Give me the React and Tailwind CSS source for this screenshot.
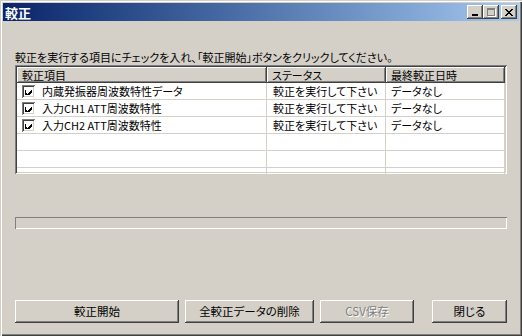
import React from "react";

const raised =
  "shadow-[inset_-1px_-1px_#404040,inset_1px_1px_#ffffff,inset_-2px_-2px_#808080,inset_2px_2px_#d4d0c8]";
const sunken =
  "shadow-[inset_1px_1px_#808080,inset_-1px_-1px_#ffffff,inset_2px_2px_#404040,inset_-2px_-2px_#d4d0c8]";

const rows = [
  { name: "内蔵発振器周波数特性データ", status: "較正を実行して下さい", date: "データなし" },
  { name: "入力CH1 ATT周波数特性", status: "較正を実行して下さい", date: "データなし" },
  { name: "入力CH2 ATT周波数特性", status: "較正を実行して下さい", date: "データなし" },
  null,
  null,
  null,
];

const CheckBox = () => (
  <div className={`flex h-[13px] w-[13px] shrink-0 items-center justify-center bg-white ${sunken}`}>
    <svg width="7" height="7" viewBox="0 0 7 7" shapeRendering="crispEdges">
      <path d="M0 2h1v3h1v1h1v-1h1v-1h1v-1h1v-1h1v3h-1v1h-1v1h-1v1h-1v1h-1v-1h-1v-1h-1z" fill="#000" />
    </svg>
  </div>
);

const TitleButton = ({ children }) => (
  <div className={`flex h-[14px] w-[16px] items-center justify-center bg-[#d4d0c8] ${raised}`}>
    {children}
  </div>
);

const Button = ({ label, className = "", disabled }) => (
  <button
    className={`h-[23px] bg-[#d4d0c8] text-[11.5px] leading-none ${raised} ${
      disabled ? "text-[#808080] [text-shadow:1px_1px_#ffffff]" : "text-black"
    } ${className}`}
  >
    {label}
  </button>
);

const cell =
  "flex h-[17px] items-center overflow-hidden whitespace-nowrap border-r border-b border-[#d4d0c8] leading-none";

export default function App() {
  return (
    <div className="flex h-[336px] w-[522px] flex-col bg-[#d4d0c8] p-[3px] font-['MS_UI_Gothic','Noto_Sans_CJK_JP',sans-serif] text-[11px] text-black shadow-[inset_1px_1px_#d4d0c8,inset_2px_2px_#ffffff,inset_-1px_-1px_#404040,inset_-2px_-2px_#808080] [font-feature-settings:'palt']">
      <div className="flex h-[18px] items-center justify-between bg-gradient-to-r from-[#0a246a] to-[#a6caf0] pl-[2px] pr-[2px]">
        <span className="text-[13px] font-bold leading-none text-white">較正</span>
        <div className="flex items-center">
          <TitleButton>
            <svg width="8" height="7" shapeRendering="crispEdges">
              <rect x="1" y="5" width="6" height="2" fill="#000" />
            </svg>
          </TitleButton>
          <TitleButton>
            <svg width="10" height="9" shapeRendering="crispEdges">
              <rect x="1" y="0" width="8" height="2" fill="#808080" />
              <rect x="1" y="0" width="1" height="8" fill="#808080" />
              <rect x="8" y="0" width="1" height="8" fill="#808080" />
              <rect x="1" y="7" width="8" height="1" fill="#808080" />
              <rect x="9" y="1" width="1" height="8" fill="#ffffff" />
              <rect x="2" y="8" width="8" height="1" fill="#ffffff" />
            </svg>
          </TitleButton>
          <div className="ml-[2px]">
            <TitleButton>
              <svg width="8" height="7" shapeRendering="crispEdges">
                <path d="M0 0h2v1h1v1h2v-1h1v-1h2v1h-1v1h-1v1h-1v1h1v1h1v1h1v1h-2v-1h-1v-1h-2v1h-1v1h-2v-1h1v-1h1v-1h1v-1h-1v-1h-1v-1h-1z" fill="#000" />
              </svg>
            </TitleButton>
          </div>
        </div>
      </div>

      <div className="flex flex-1 flex-col px-[12px]">
        <p className="mt-[29px] h-[14px] whitespace-nowrap leading-[14px]">
          較正を実行する項目にチェックを入れ、「較正開始」ボタンをクリックしてください。
        </p>

        <div className={`mt-[1px] h-[109px] bg-white p-[2px] ${sunken}`}>
          <div className="grid grid-cols-[250px_119px_119px]">
            {["較正項目", "ステータス", "最終較正日時"].map((h) => (
              <div
                key={h}
                className={`flex h-[16px] items-center whitespace-nowrap bg-[#d4d0c8] pl-[5px] leading-none ${raised}`}
              >
                {h}
              </div>
            ))}
            {rows.map((r, i) => (
              <React.Fragment key={i}>
                <div className={`${cell} gap-[7px] pl-[5px]`}>
                  {r && <CheckBox />}
                  {r && <span>{r.name}</span>}
                </div>
                <div className={`${cell} pl-[6px]`}>{r && r.status}</div>
                <div className={`${cell} pl-[5px]`}>{r && r.date}</div>
              </React.Fragment>
            ))}
          </div>
        </div>

        <div className="mt-[43px] h-[12px] shadow-[inset_1px_1px_#808080,inset_-1px_-1px_#ffffff]" />

        <div className="mt-[71px] flex items-center">
          <Button label="較正開始" className="w-[164px]" />
          <Button label="全較正データの削除" className="ml-[6px] w-[129px]" />
          <Button label="CSV保存" className="ml-[6px] w-[94px]" disabled />
          <div className="flex-1" />
          <Button label="閉じる" className="w-[75px]" />
        </div>
      </div>
    </div>
  );
}
